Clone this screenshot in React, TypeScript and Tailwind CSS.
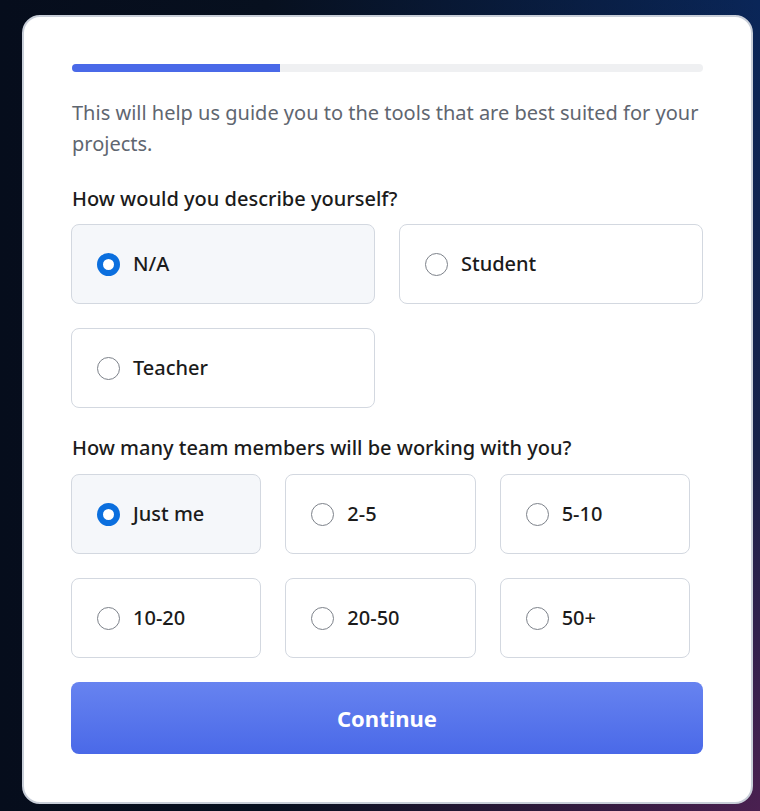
import { useState } from "react";

const roles = ["N/A", "Student", "Teacher"];
const sizes = ["Just me", "2-5", "5-10", "10-20", "20-50", "50+"];

function Option({
  label,
  checked,
  onSelect,
}: {
  label: string;
  checked: boolean;
  onSelect: () => void;
}) {
  return (
    <button
      onClick={onSelect}
      className={
        "flex h-[80px] items-center gap-[13px] rounded-lg border border-[#d3d8e0] pl-[25px] text-left " +
        (checked ? "bg-[#f5f7fa]" : "bg-white")
      }
    >
      <span
        className={
          "h-[23px] w-[23px] shrink-0 rounded-full bg-white " +
          (checked ? "border-[6px] border-[#0b6fde]" : "border border-[#7d828a]")
        }
      />
      <span className="text-[20px] font-medium text-[#1b1b1b]">{label}</span>
    </button>
  );
}

export default function App() {
  const [role, setRole] = useState("N/A");
  const [size, setSize] = useState("Just me");

  return (
    <div
      className="min-h-[811px] w-full bg-[linear-gradient(90deg,#060d1c_0%,#07101f_35%,rgba(7,16,31,0)_100%),linear-gradient(180deg,#0a2658_0%,#17224a_55%,#4a2050_100%)] pl-[22px] pt-[15px]"
      style={{ fontFamily: '"Noto Sans", "Open Sans", sans-serif' }}
    >
      <div className="w-[731px] rounded-[18px] border-2 border-[#c8ced8] bg-white pb-[48px] pl-[47px] pr-[48px] pt-[47px]">
        <div className="ml-px h-[8px] w-[631px] rounded-full bg-[#eff0f2]">
          <div className="h-full w-[33%] rounded-l-full bg-[#4a69e8]" />
        </div>

        <p className="ml-px mt-[25px] text-[20px] leading-[31px] text-[#5f6670]">
          This will help us guide you to the tools that are best suited for your
          projects.
        </p>

        <h2 className="ml-px mt-[25px] text-[20px] font-medium text-[#1b1b1b]">
          How would you describe yourself?
        </h2>
        <div className="mt-[10px] grid grid-cols-2 gap-6">
          {roles.map((r) => (
            <Option key={r} label={r} checked={role === r} onSelect={() => setRole(r)} />
          ))}
        </div>

        <h2 className="ml-px mt-[25px] text-[20px] font-medium text-[#1b1b1b]">
          How many team members will be working with you?
        </h2>
        <div className="mt-[11px] grid w-[619px] grid-cols-3 gap-6">
          {sizes.map((s) => (
            <Option key={s} label={s} checked={size === s} onSelect={() => setSize(s)} />
          ))}
        </div>

        <button className="mt-[24px] h-[72px] w-full rounded-lg bg-[linear-gradient(180deg,#6783f0,#4a69e8)] text-[22px] font-bold text-white">
          Continue
        </button>
      </div>
    </div>
  );
}
